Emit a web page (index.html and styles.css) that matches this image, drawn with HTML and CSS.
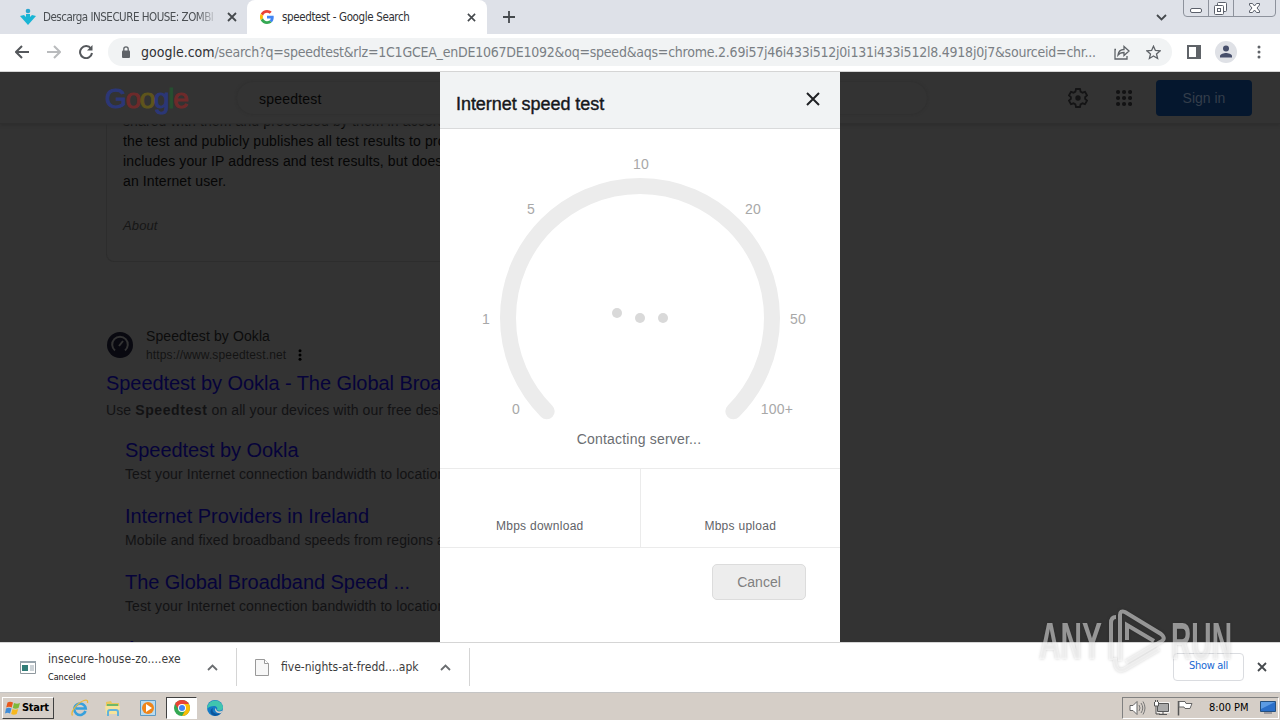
FILE: index.html
```html
<!DOCTYPE html>
<html lang="en">
<head>
  <meta charset="utf-8">
  <title>speedtest - Google Search</title>
  <link rel="stylesheet" href="styles.css">
</head>
<body>
  <div id="screen">
    <div id="tabs">
      <div class="tab first">
        <svg class="favicon" width="18" height="18" viewBox="0 0 18 18"><circle cx="9" cy="3" r="2.3" fill="#2ba6cf"/><path d="M1 8l4-1 2 2V6h4v3l2-2 4 1-8 9z" fill="#19b5d5"/></svg>
        <span class="tab-title fade">Descarga INSECURE HOUSE: ZOMBI</span>
        <svg class="x" width="10" height="10" viewBox="0 0 10 10"><path d="M1 1l8 8M9 1L1 9"/></svg>
      </div>
      <div class="tab active">
        <svg class="favicon" width="14" height="14" viewBox="0 0 48 48"><path fill="#ea4335" d="M24 9.5c3.500 0 6.700 1.200 9.200 3.600l6.900-6.900C35.900 2.400 30.500 0 24 0 14.600 0 6.500 5.400 2.600 13.200l8 6.200C12.400 13.700 17.700 9.500 24 9.500z"/><path fill="#4285f4" d="M47 24.500c0-1.600-.2-3.100-.4-4.500H24v9h12.900c-.6 3-2.200 5.500-4.700 7.200l7.700 6C44.400 38 47 32 47 24.500z"/><path fill="#fbbc05" d="M10.500 28.600a14.500 14.500 0 0 1 0-9.200l-8-6.200a24 24 0 0 0 0 21.600z"/><path fill="#34a853" d="M24 48c6.500 0 11.900-2.100 15.900-5.800l-7.700-6c-2.200 1.500-4.900 2.300-8.200 2.300-6.300 0-11.600-4.200-13.500-9.900l-8 6.200C6.500 42.600 14.600 48 24 48z"/></svg>
        <span class="tab-title">speedtest - Google Search</span>
        <svg class="x" width="9" height="9" viewBox="0 0 10 10"><path d="M1 1l8 8M9 1L1 9"/></svg>
      </div>
      <svg class="plus" width="12" height="12" viewBox="0 0 12 12"><path d="M6 0v12M0 6h12"/></svg>
      <svg class="caret" width="11" height="7" viewBox="0 0 11 7"><path d="M1 1l4.500 4.500L10 1"/></svg>
      <svg class="window-buttons" width="94" height="17" viewBox="0 0 94 17">
        <path d="M.5 0v13q0 3.500 3.500 3.500h85q3.500 0 3.500-3.500V0M25.500 0v16M50.500 0v16" fill="none" stroke="#8d929c"/>
        <g fill="#fff" stroke="#5b606b"><rect x="7.500" y="8.500" width="11" height="4" rx="1.500"/><rect x="34.500" y="2.500" width="9" height="9" rx="1"/><rect x="31.500" y="5.500" width="9" height="9" rx="1"/><rect x="34.500" y="8.500" width="3" height="3"/><path d="M66.500 3.500h3l2 2.500 2-2.500h3v1.500L74 8l2.500 3v1.500h-3l-2-2.500-2 2.500h-3V11L69 8l-2.500-3z"/></g>
      </svg>
    </div>

    <div id="toolbar">
      <svg class="back" width="14" height="14" viewBox="0 0 14 14"><path d="M14 7H1.500M7 1L1 7l6 6"/></svg>
      <svg class="forward" width="14" height="14" viewBox="0 0 14 14"><path d="M0 7h12.500M7 1l6 6-6 6"/></svg>
      <svg class="reload" width="14" height="14" viewBox="0 0 14 14"><path d="M12 3.700A6 6 0 1 0 13 8" /><path d="M13.500 0v5.500H8z" class="solid"/></svg>
      <div id="omnibox">
        <svg width="8" height="12" viewBox="0 0 8 12"><rect y="4.500" width="8" height="7.500" rx="1" fill="#5f6368"/><path d="M1.800 5V3a2.200 2.200 0 0 1 4.400 0v2" fill="none" stroke="#5f6368" stroke-width="1.300"/></svg>
        <span class="url"><b>google.com</b>/search?q=speedtest&amp;rlz=1C1GCEA_enDE1067DE1092&amp;oq=speed&amp;aqs=chrome.2.69i57j46i433i512j0i131i433i512l8.4918j0j7&amp;sourceid=chr...</span>
        <svg class="share" width="16" height="15" viewBox="0 0 16 15"><path d="M2 4.500H1V14h12v-3M4 10c.5-4 2.500-5.500 6-5.500V1.500l5 4.500-5 4.500V7.500C7 7.500 5.500 8 4 10z"/></svg>
        <svg class="star" width="15" height="15" viewBox="0 0 15 15"><path d="M7.500 1.200l1.900 4.300 4.600.4-3.500 3 1.100 4.600-4.100-2.500-4.100 2.500 1.100-4.600-3.500-3 4.600-.4z"/></svg>
      </div>
      <svg class="side-panel" width="14" height="14" viewBox="0 0 14 14"><path d="M1 1h12v12H1z" fill="none" stroke="#5f6368" stroke-width="2"/><path d="M9 0h5v14H9z" fill="#5f6368"/></svg>
      <svg class="profile" width="22" height="22" viewBox="0 0 22 22"><circle cx="11" cy="11" r="11" fill="#dfe1e6"/><circle cx="11" cy="7.500" r="3" fill="#474f6b"/><path d="M5 16.500v-1.500c0-2 4-3 6-3s6 1 6 3v1.500z" fill="#474f6b"/></svg>
      <svg class="menu" width="4" height="14" viewBox="0 0 4 14"><circle cx="2" cy="2" r="1.500"/><circle cx="2" cy="7" r="1.500"/><circle cx="2" cy="12" r="1.500"/></svg>
    </div>

    <div id="page">
      <div id="results">
        <div class="snippet">
          <p>shared with them and processed by them in accordance<br>the test and publicly publishes all test results to promote<br>includes your IP address and test results, but doesn't<br>an Internet user.</p>
          <p class="about">About</p>
        </div>
        <div class="site">
          <svg width="26" height="26" viewBox="0 0 26 26"><circle cx="13" cy="13" r="13" fill="#090910"/><path d="M8 18.500a7.800 7.800 0 1 1 10 0" fill="none" stroke="#333" stroke-width="2"/><path d="M12 14l4-5" stroke="#333" stroke-width="2"/></svg>
          <div>
            <div class="site-name">Speedtest by Ookla</div>
            <div class="site-url">https://www.speedtest.net <svg width="4" height="12" viewBox="0 0 4 12"><circle cx="2" cy="1.700" r="1.500"/><circle cx="2" cy="6" r="1.500"/><circle cx="2" cy="10.300" r="1.500"/></svg></div>
          </div>
        </div>
        <div class="link main-link">Speedtest by Ookla - The Global Broadband</div>
        <div class="desc main-desc">Use <b>Speedtest</b> on all your devices with our free desktop</div>
        <div class="sub">
          <div class="link">Speedtest by Ookla</div>
          <div class="desc">Test your Internet connection bandwidth to locations</div>
        </div>
        <div class="sub">
          <div class="link">Internet Providers in Ireland</div>
          <div class="desc">Mobile and fixed broadband speeds from regions and</div>
        </div>
        <div class="sub">
          <div class="link">The Global Broadband Speed ...</div>
          <div class="desc">Test your Internet connection bandwidth to locations</div>
        </div>
        <div class="sub">
          <div class="link">Apps</div>
        </div>
      </div>

      <div id="search-header">
        <div class="logo"><span class="b">G</span><span class="r">o</span><span class="y">o</span><span class="b">g</span><span class="g">l</span><span class="r">e</span></div>
        <div class="search-box">speedtest</div>
        <svg class="gear" width="20" height="20" viewBox="0 0 20 20"><path d="M8 1h4l.6 2.600 1.900 1.100 2.500-.8 2 3.500-1.900 1.800v1.600l1.900 1.800-2 3.500-2.500-.8-1.900 1.100L12 19H8l-.6-2.600-1.900-1.100-2.500.8-2-3.500 1.900-1.800V9.200L1 7.400l2-3.500 2.500.8 1.900-1.100z"/><circle cx="10" cy="10" r="2.700"/></svg>
        <svg class="apps" width="16" height="16" viewBox="0 0 16 16"><path d="M2 2h13M2 8h13M2 14h13"/></svg>
        <div class="sign-in">Sign in</div>
      </div>

      <div id="speed-test">
        <div class="dialog-header">
          <span>Internet speed test</span>
          <svg width="14" height="14" viewBox="0 0 14 14"><path d="M1 1l12 12M13 1L1 13"/></svg>
        </div>
        <svg class="gauge" width="400" height="296" viewBox="0 0 400 296">
          <path class="arc" d="M106.700 282.300a132 132 0 1 1 186.600 0"/>
          <g class="dots"><circle cx="177" cy="184" r="5"/><circle cx="200" cy="189" r="5"/><circle cx="223" cy="189" r="5"/></g>
          <g class="ticks">
            <text x="76" y="285">0</text>
            <text x="46" y="195">1</text>
            <text x="91" y="85">5</text>
            <text x="201" y="40">10</text>
            <text x="313" y="85">20</text>
            <text x="358" y="195">50</text>
            <text x="337" y="285">100+</text>
          </g>
        </svg>
        <div class="status">Contacting server...</div>
        <div class="speeds">
          <div>Mbps download</div>
          <div>Mbps upload</div>
        </div>
        <button class="cancel">Cancel</button>
      </div>
    </div>

    <div id="downloads">
      <div class="download one">
        <svg width="16" height="14" viewBox="0 0 16 14"><path d="M.5 1.500h15v12H.5z" fill="#fff" stroke="#8f989e"/><path d="M0 1h16v2H0z" fill="#98a5ad"/><path d="M2 5h6v6H2z" fill="#327d78"/><path d="M10 6h4M10 8h4M10 10h4" stroke="#9aa7b0"/></svg>
        <div class="names"><div class="file">insecure-house-zo....exe</div><div class="state">Canceled</div></div>
        <svg class="up" width="11" height="7" viewBox="0 0 11 7"><path d="M1 6l4.500-4.500L10 6"/></svg>
      </div>
      <div class="download two">
        <svg width="14" height="17" viewBox="0 0 14 17"><path d="M.5.500h9l4 4v12H.5z" fill="#f7f7f7" stroke="#999"/><path d="M9.500.500v4h4" fill="#fff" stroke="#999"/></svg>
        <div class="names"><div class="file">five-nights-at-fredd....apk</div></div>
        <svg class="up" width="11" height="7" viewBox="0 0 11 7"><path d="M1 6l4.500-4.500L10 6"/></svg>
      </div>
      <div class="show-all">Show all</div>
      <svg class="close-bar" width="10" height="10" viewBox="0 0 10 10"><path d="M1 1l8 8M9 1L1 9"/></svg>
    </div>

    <div id="taskbar">
      <div class="start">
        <svg width="16" height="16" viewBox="0 0 16 16"><path d="M2.500 2.500Q5 1 8 2.500L6.700 7.500Q4 6.200 1.200 7.500z" fill="#e8581c"/><path d="M9 3q3 1.300 6 0l-1.500 5q-3 1.300-5.700 0z" fill="#7eb938"/><path d="M1 8.500q2.700-1.300 5.500 0L5 13.500Q2.500 12 0 13.500z" fill="#3f8cd8"/><path d="M7.500 9q2.700 1.300 5.700 0l-1.500 5q-3 1.300-5.500 0z" fill="#f7b81e"/></svg>
        Start
      </div>
      <svg class="ie" width="18" height="18" viewBox="0 0 18 18"><path d="M14.500 12A5.700 5.700 0 1 1 14.700 9.500H5" fill="none" stroke="#37a0dc" stroke-width="2.600"/><path d="M1.500 16.500C-1 13 6 4 13 1.500c3-1 4 0 3.500 2.500" fill="none" stroke="#e9b83a" stroke-width="1.300"/></svg>
      <svg class="folder" width="18" height="18" viewBox="0 0 18 18"><path d="M2 3l5-1 1 2h7v10H2z" fill="#e8c75d"/><path d="M3 5h11v4H3z" fill="#6fb86a"/><path d="M1 7h15l-1 8H2z" fill="#f6e39a"/><path d="M4 17v-4q0-2 2-2h6q2 0 2 2v4" fill="none" stroke="#62b3dc" stroke-width="2"/></svg>
      <svg class="player" width="16" height="16" viewBox="0 0 16 16"><path d="M.5.500h15v15H.5z" fill="#b9dbef" stroke="#5d9ac4"/><circle cx="8" cy="8" r="6" fill="#f08519"/><path d="M6 4l6 4-6 4z" fill="#fff"/></svg>
      <div class="task">
        <svg width="16" height="16" viewBox="0 0 16 16"><circle cx="8" cy="8" r="8" fill="#34a853"/><path d="M8 8L1.100 4A8 8 0 0 1 14.900 4z" fill="#ea4335"/><path d="M8 4h6.900A8 8 0 0 1 8 16l3.500-6z" fill="#fbbc05"/><path d="M1.100 4L5 10l3-2V4z" fill="#ea4335"/><circle cx="8" cy="8" r="4" fill="#fff"/><circle cx="8" cy="8" r="3" fill="#4285f4"/></svg>
      </div>
      <svg class="edge" width="16" height="16" viewBox="0 0 16 16"><circle cx="8" cy="8" r="8" fill="#167ac6"/><path d="M.2 7A8 8 0 0 1 16 7.500c0 3-4 4-6 2.500 1-2-.5-4-3-4S1 7 .2 9z" fill="#40c5af"/><path d="M6 8c-2 4 2 7 8 5.300A8 8 0 0 1 8 16C3 15 2 10 6 8z" fill="#0c559c"/><path d="M9.500 10c1 2 3.500 1.500 6 .5l-1.200 2.500C10 14 7 11 8.500 8z" fill="#d6cfc8"/></svg>
      <div class="tray">
        <svg width="17" height="16" viewBox="0 0 17 16"><path d="M1 5.500h3l4-4v13l-4-4H1z" fill="#fff" stroke="#666"/><path d="M10 5q2 3 0 6M12 3q3.500 5 0 10M14 1.500q4 6.500 0 13" fill="none" stroke="#777"/></svg>
        <svg width="17" height="16" viewBox="0 0 17 16"><path d="M4.500 3.500h11v8h-11z" fill="#aaa" stroke="#fff" stroke-width="2.500"/><path d="M4.500 3.500h11v8h-11z" fill="#aaa" stroke="#555"/><path d="M6 14.500h8M10 12v2M3 6v8h4" fill="none" stroke="#555"/><path d="M1.500 2v4h4V2M2.500 0v2M4.500 0v2" fill="#fff" stroke="#555"/></svg>
        <svg width="17" height="16" viewBox="0 0 17 16"><path d="M1.500 1v14.500" stroke="#555" stroke-width="1.500"/><path d="M2 1.500h6l1 2h6l-2 5H8l-1-1.500H2z" fill="#fff" stroke="#666"/></svg>
        <span>8:00 PM</span>
        <svg class="desktop" width="16" height="13" viewBox="0 0 16 13"><path d="M.5.500h15v10H.5z" fill="#2a6fc9" stroke="#24507f"/><path d="M1 1h14L1 8z" fill="#5b9be4"/><path d="M4 12h8" stroke="#667"/></svg>
      </div>
    </div>

    <svg id="watermark" width="200" height="68" viewBox="0 0 200 68">
      <text x="3" y="52" textLength="63" lengthAdjust="spacingAndGlyphs">ANY</text>
      <text x="135" y="52" textLength="61" lengthAdjust="spacingAndGlyphs">RUN</text>
      <path d="M80 10q-5 0-5 6v37M84 54V8q0-5 5-3l36 22q6 5-1 8l-34 20M91 33V18l27 16M79 51q0 16 10 11l34-20"/>
    </svg>
  </div>
</body>
</html>
```
FILE: styles.css
```css
html, body {
  margin: 0;
  font-family: "Liberation Sans", Arial, sans-serif;
}

svg {
  display: block;
  flex: none;
}

#screen {
  position: relative;
  width: 1280px;
  height: 720px;
  display: flex;
  flex-direction: column;
  overflow: hidden;
  background: #fff;
}

#tabs, #toolbar, #downloads, #taskbar {
  font-family: "DejaVu Sans Condensed", "DejaVu Sans", sans-serif;
  font-stretch: condensed;
  flex: none;
  display: flex;
  align-items: center;
  box-sizing: border-box;
  white-space: nowrap;
}

/* tab strip */
#tabs {
  height: 34px;
  background: #dee1e8;
}

.tab {
  height: 34px;
  box-sizing: border-box;
  display: flex;
  align-items: center;
  font-size: 11.5px;
  color: #4a4e52;
}

.tab.first {
  width: 247px;
  padding: 0 10px 0 19px;
}

.tab.first .favicon {
  margin-right: 6px;
}

.tab.active {
  width: 240px;
  padding: 0 11px 0 13px;
  background: #fff;
  border-radius: 8px 8px 0 0;
  color: #303134;
}

.tab.active .favicon {
  margin-right: 8px;
}

.tab-title {
  flex: 1;
  overflow: hidden;
  letter-spacing: -0.37px;
}

.tab-title.fade {
  flex: none;
  width: 175px;
  margin-right: 9px;
  letter-spacing: -0.5px;
  -webkit-mask-image: linear-gradient(to right, #000 88%, transparent);
}

.tab .x, .plus, .caret, .close-bar, .up {
  fill: none;
  stroke: #45494d;
  stroke-width: 1.8;
}

.plus {
  margin-left: 16px;
}

.caret {
  margin-left: auto;
  margin-right: 16px;
}

.window-buttons {
  align-self: flex-start;
  margin-right: 3px;
}

/* address bar */
#toolbar {
  height: 38px;
  padding: 0 19px 1px 15px;
  border-bottom: 1px solid #d5d5d5;
}

.back, .forward, .reload {
  fill: none;
  stroke: #55585c;
  stroke-width: 2;
}

.forward {
  stroke: #b9bbbd;
  margin-left: 18px;
}

.reload {
  margin-left: 18px;
}

.reload .solid {
  fill: #55585c;
  stroke: none;
}

#omnibox {
  width: 1064px;
  height: 28px;
  margin-left: 15px;
  padding: 0 10px 0 14px;
  box-sizing: border-box;
  display: flex;
  align-items: center;
  background: #f1f3f4;
  border-radius: 14px;
}

.url {
  width: 973px;
  margin-left: 11px;
  font-size: 14px;
  letter-spacing: -0.23px;
  color: #7a7f84;
}

.url b {
  font-weight: normal;
  letter-spacing: 0;
  color: #303134;
}

.share, .star {
  fill: none;
  stroke: #5f6368;
  stroke-width: 1.3;
}

.star {
  margin-left: 16px;
}

.side-panel {
  margin-left: 15px;
}

.profile {
  margin-left: 14px;
}

.menu {
  margin-left: auto;
  fill: #5f6368;
}

/* dimmed results page */
#page {
  position: relative;
  flex: 1;
  min-height: 0;
  overflow: hidden;
  background: #333;
}

#search-header {
  position: absolute;
  top: 0;
  left: 0;
  width: 1280px;
  height: 52px;
  box-sizing: border-box;
  padding: 0 28px 0 105px;
  display: flex;
  align-items: center;
  background: #333;
  border-bottom: 1px solid #2e2e2e;
  box-shadow: 0 1px 3px #2c2c2c;
}

.logo {
  width: 132px;
  padding-top: 2px;
  box-sizing: border-box;
  font-size: 28px;
  letter-spacing: -1.3px;
  -webkit-text-stroke: 1px;
}

.logo .b { color: #2b3777; }
.logo .r { color: #6e2a2a; }
.logo .y { color: #5f551c; }
.logo .g { color: #264f30; }

.search-box {
  width: 690px;
  height: 32px;
  line-height: 34px;
  padding-left: 22px;
  box-sizing: border-box;
  border-radius: 16px;
  box-shadow: 0 0 3px #2d2d2d;
  font-size: 14px;
  letter-spacing: 0.2px;
  color: #060606;
}

.gear {
  margin-left: auto;
  fill: none;
  stroke: #141415;
  stroke-width: 1.8;
}

.gear circle {
  fill: #141415;
  stroke: none;
}

.apps {
  margin: 0 24px 0 28px;
  fill: none;
  stroke: #121213;
  stroke-width: 4;
  stroke-linecap: round;
  stroke-dasharray: 0.1 5.9;
}

.sign-in {
  width: 96px;
  height: 36px;
  line-height: 36px;
  text-align: center;
  font-size: 14px;
  background: #05172e;
  color: #343e4b;
  border-radius: 4px;
}

#results {
  width: 560px;
  margin-left: 106px;
  white-space: nowrap;
}

.snippet {
  height: 190px;
  box-sizing: border-box;
  padding: 39px 16px 0;
  border: 1px solid #2d2d2d;
  border-top: 0;
  border-radius: 0 0 8px 8px;
  font-size: 14px;
  line-height: 20px;
  letter-spacing: 0.12px;
  color: #060606;
}

.snippet p {
  margin: 0;
}

.snippet .about {
  margin-top: 25px;
  font-size: 13px;
  font-style: italic;
  color: #161616;
}

.site {
  display: flex;
  align-items: center;
  gap: 13px;
  margin: 64px 0 0 1px;
}

.site-name {
  font-size: 14px;
  line-height: 20px;
  letter-spacing: 0.1px;
  color: #0c0c0c;
}

.site-url {
  display: flex;
  align-items: center;
  gap: 12px;
  font-size: 12px;
  line-height: 18px;
  letter-spacing: 0.14px;
  color: #131313;
}

.link {
  font-size: 20px;
  line-height: 26px;
  letter-spacing: -0.06px;
  color: #06033a;
}

.main-link {
  margin-top: 6px;
}

.desc {
  font-size: 14px;
  line-height: 22px;
  letter-spacing: 0.1px;
  color: #121213;
}

.desc b {
  letter-spacing: 0.6px;
}

.main-desc {
  margin-top: 3px;
}

.sub {
  margin: 0 0 18px 19px;
}

.main-desc + .sub {
  margin-top: 16px;
}

/* speed test dialog */
#speed-test {
  position: absolute;
  top: 0;
  left: 440px;
  width: 400px;
  height: 570px;
  display: flex;
  flex-direction: column;
  background: #fff;
}

.dialog-header {
  height: 57px;
  box-sizing: border-box;
  padding: 8px 20px 0 16px;
  display: flex;
  align-items: center;
  justify-content: space-between;
  background: #f1f3f4;
  border-bottom: 1px solid #d9dadb;
  font-size: 18px;
  letter-spacing: -0.05px;
  color: #16181b;
  -webkit-text-stroke: 0.4px;
}

.dialog-header svg {
  margin-bottom: 10px;
  fill: none;
  stroke: #202124;
  stroke-width: 2;
}

.arc {
  fill: none;
  stroke: #ececec;
  stroke-width: 16;
  stroke-linecap: round;
}

.dots {
  fill: #d9d9d9;
}

.ticks {
  font-size: 14px;
  text-anchor: middle;
  letter-spacing: 0.2px;
  fill: #a8a8a8;
}

.status {
  height: 43px;
  line-height: 28px;
  padding-right: 2px;
  text-align: center;
  font-size: 14px;
  letter-spacing: 0.2px;
  color: #6b6e72;
}

.speeds {
  height: 80px;
  box-sizing: border-box;
  display: flex;
  border-top: 1px solid #ebebeb;
  border-bottom: 1px solid #ebebeb;
  font-size: 12px;
  color: #5f6368;
}

.speeds div {
  flex: 1;
  padding-top: 50px;
  text-align: center;
  letter-spacing: 0.27px;
}

.speeds div + div {
  border-left: 1px solid #ebebeb;
}

.cancel {
  align-self: flex-end;
  width: 94px;
  height: 36px;
  margin: 16px 34px 0 0;
  background: #ededed;
  border: 1px solid #dcdcdc;
  border-radius: 5px;
  font-family: inherit;
  font-size: 14px;
  color: #808080;
}

/* download shelf */
#downloads {
  height: 50px;
  padding-bottom: 1px;
  border-top: 1px solid #d5d5d5;
  background: #fff;
}

.download {
  height: 38px;
  box-sizing: border-box;
  display: flex;
  align-items: center;
  border-right: 1px solid #d5d5d5;
}

.one {
  width: 237px;
  padding: 0 18px 0 20px;
}

.two {
  width: 233px;
  padding: 0 18px;
}

.names {
  margin-left: 12px;
  color: #3c3c3c;
}

.file {
  font-size: 12px;
  line-height: 16px;
}

.one .file {
  letter-spacing: 0.08px;
}

.state {
  font-size: 9px;
  line-height: 14px;
  margin-top: 3px;
  color: #111;
}

.up {
  margin-left: auto;
  stroke: #6a6d70;
}

.show-all {
  width: 71px;
  height: 28px;
  line-height: 24px;
  box-sizing: border-box;
  margin: 0 13px 0 auto;
  text-align: center;
  font-size: 11px;
  letter-spacing: -0.3px;
  color: #1967d2;
  border: 1px solid #dadce0;
  border-radius: 4px;
}

.close-bar {
  margin-right: 13px;
}

/* windows taskbar */
#taskbar {
  height: 28px;
  padding: 2px 1px 0 2px;
  background: #d5cec7;
  border-top: 1px solid #c5c5c5;
  color: #000;
}

.start {
  width: 52px;
  height: 22px;
  box-sizing: border-box;
  display: flex;
  align-items: center;
  gap: 1px;
  padding-left: 2px;
  border: 1px solid;
  border-color: #fff #404040 #404040 #fff;
  font-size: 11px;
  font-weight: bold;
  letter-spacing: -0.3px;
}

.ie {
  margin-left: 17px;
}

.folder {
  margin-left: 15px;
}

.player {
  margin-left: 18px;
}

.task {
  width: 31px;
  height: 22px;
  box-sizing: border-box;
  margin-left: 10px;
  display: flex;
  align-items: center;
  justify-content: center;
  background: #fff;
  border: 1px solid;
  border-color: #404040 #fff #fff #404040;
}

.edge {
  margin-left: 10px;
}

.tray {
  width: 157px;
  height: 22px;
  box-sizing: border-box;
  margin-left: auto;
  padding: 0 2px 0 6px;
  display: flex;
  align-items: center;
  gap: 7px;
  border: 1px solid;
  border-color: #808080 #fff #fff #808080;
  font-size: 11px;
}

.tray span {
  margin-left: 8px;
  letter-spacing: -0.05px;
}

.desktop {
  margin-left: auto;
}

#watermark {
  position: absolute;
  top: 607px;
  left: 1036px;
  filter: drop-shadow(0 0 1.5px rgba(0, 0, 0, 0.35));
}

#watermark text {
  font-size: 51px;
  font-weight: bold;
  fill: rgba(255, 255, 255, 0.5);
}

#watermark path {
  fill: none;
  stroke: rgba(255, 255, 255, 0.5);
  stroke-width: 4;
}
```
